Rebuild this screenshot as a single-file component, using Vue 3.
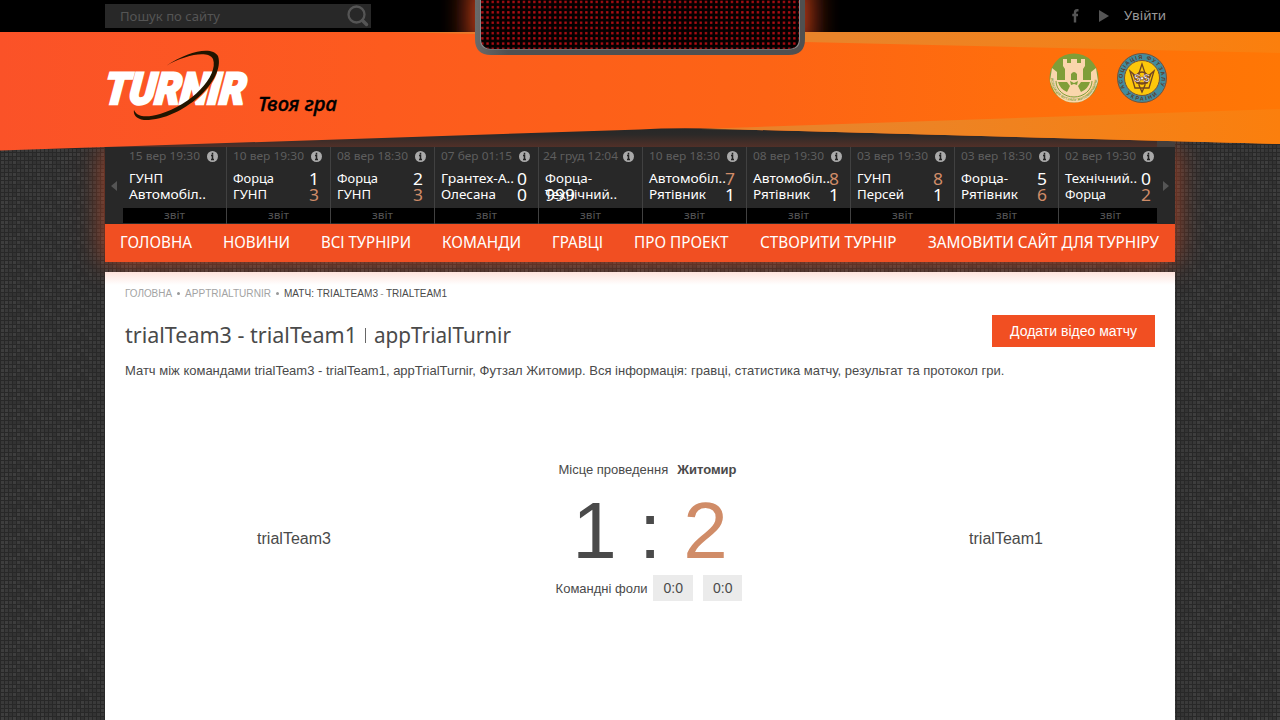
<script setup>
import { h } from 'vue'

// Single line of text stretched to a fixed measure.
const FitText = (props) =>
  h('svg', { class: 'fit', width: props.w, height: props.size * 1.25 }, [
    h('text', { x: 0, y: props.size, 'font-size': props.size, textLength: props.w, lengthAdjust: 'spacingAndGlyphs', fill: 'currentColor' }, props.text)
  ])
FitText.props = ['text', 'w', 'size']

const matches = [
  { date: '15 вер 19:30', a: 'ГУНП', aw: 34, b: 'Автомобіл..', bw: 77, s: ['', ''] },
  { date: '10 вер 19:30', a: 'Форца', aw: 41, b: 'ГУНП', bw: 34, s: ['1', '3'], win: 1 },
  { date: '08 вер 18:30', a: 'Форца', aw: 41, b: 'ГУНП', bw: 34, s: ['2', '3'], win: 1 },
  { date: '07 бер 01:15', a: 'Грантех-А..', aw: 73, b: 'Олесана', bw: 55, s: ['0', '0'] },
  { date: '24 груд 12:04', dw: 75, a: 'Форца-', aw: 47, b: 'Технічний..', bw: 72, s: ['', ''], over: '999' },
  { date: '10 вер 18:30', a: 'Автомобіл..', aw: 77, b: 'Рятівник', bw: 57, s: ['7', '1'], win: 0 },
  { date: '08 вер 19:30', a: 'Автомобіл..', aw: 77, b: 'Рятівник', bw: 57, s: ['8', '1'], win: 0 },
  { date: '03 вер 19:30', a: 'ГУНП', aw: 34, b: 'Персей', bw: 47, s: ['8', '1'], win: 0 },
  { date: '03 вер 18:30', a: 'Форца-', aw: 47, b: 'Рятівник', bw: 57, s: ['5', '6'], win: 1 },
  { date: '02 вер 19:30', a: 'Технічний..', aw: 72, b: 'Форца', bw: 41, s: ['0', '2'], win: 1 }
]
const nav = [
  ['ГОЛОВНА', 72], ['НОВИНИ', 67], ['ВСІ ТУРНІРИ', 90], ['КОМАНДИ', 79],
  ['ГРАВЦІ', 51], ['ПРО ПРОЕКТ', 94.5], ['СТВОРИТИ ТУРНІР', 136.5], ['ЗАМОВИТИ САЙТ ДЛЯ ТУРНІРУ', 231]
]
const shades = ['#3a3a3a', '#353535', '#383838', '#3e3e3e', '#333333']
const tiles = Array.from({ length: 256 }, (_, i) => ({
  x: (i % 16) * 4, y: Math.floor(i / 16) * 4,
  c: shades[(i * 7 + ((i * i) >> 3) + ((i * 13) >> 4)) % 5]
}))
</script>

<template>
  <div class="page">
    <svg class="texture" width="1280" height="720">
      <defs>
        <pattern id="mesh" width="64" height="64" patternUnits="userSpaceOnUse">
          <rect width="64" height="64" fill="#282828" />
          <rect v-for="(t, i) in tiles" :key="i" :x="t.x + 1" :y="t.y + 1" width="3" height="3" :fill="t.c" />
        </pattern>
      </defs>
      <rect width="1280" height="720" fill="url(#mesh)" />
    </svg>

    <header class="header">
      <div class="topbar">
        <div class="search">
          <FitText text="Пошук по сайту" :w="100" :size="13" />
          <svg width="22" height="22" viewBox="0 0 22 22" fill="none" stroke="#555">
            <circle cx="9.5" cy="9.500" r="8" stroke-width="2.300" /><path d="M15.500 15.500L19.500 19.500" stroke-width="3.500" stroke-linecap="round" />
          </svg>
        </div>
        <div class="links">
          <svg class="fb" width="7" height="14" viewBox="0 0 7 14"><path d="M6.500 1.200H5.200C3.600 1.200 3 2 3 4V13.500M.3 6H6" fill="none" stroke="#555" stroke-width="2.400" /></svg>
          <svg class="play" width="10" height="12"><path d="M0 0L10 6L0 12Z" fill="#555" /></svg>
          <FitText text="Увійти" :w="42" :size="13" />
        </div>
      </div>

      <svg class="banner" width="1280" height="152" viewBox="0 0 1280 152">
        <defs>
          <linearGradient id="flame"><stop offset="0" stop-color="#fb5228" /><stop offset=".3" stop-color="#fd5b1e" /><stop offset=".6" stop-color="#fd6415" /><stop offset=".8" stop-color="#ff6e0c" /><stop offset="1" stop-color="#ff7705" /></linearGradient>
          <linearGradient id="band" gradientUnits="userSpaceOnUse" x1="400" x2="1280" y1="0" y2="0"><stop offset="0" stop-color="#e9782b" /><stop offset=".5" stop-color="#e9842a" /><stop offset="1" stop-color="#fb7f0d" /></linearGradient>
          <linearGradient id="under" x1="0" x2="0" y1="0" y2="1"><stop offset="0" stop-color="#262727" /><stop offset=".4" stop-color="#2b2928" /><stop offset="1" stop-color="#513028" /></linearGradient>
          <linearGradient id="frame" x1="0" x2="1" y1="0" y2="0"><stop offset="0" stop-color="#6a6a6a" /><stop offset=".1" stop-color="#505050" /><stop offset="1" stop-color="#505050" /></linearGradient>
          <pattern id="led" x="480.200" y="-.2" width="5.200" height="5.200" patternUnits="userSpaceOnUse"><rect x="1" y="1" width="2.300" height="2.300" fill="#b50d13" /></pattern>
          <filter id="soft" x="-20%" y="-80%" width="140%" height="260%"><feGaussianBlur stdDeviation="14" /></filter>
          <clipPath id="bar"><rect width="1280" height="32" /></clipPath>
        </defs>
        <rect x="105" y="126" width="1070" height="21" fill="url(#under)" />
        <rect x="1157" y="140" width="18" height="7" fill="#443e3c" />
        <path d="M0 32H1280V144L740 129.500Q680 127 640 129.500L0 150.500Z" fill="url(#flame)" />
        <path d="M390 32H1280V53L805 42L475 34Z M700 129L1280 109V144L740 129.500Z" fill="url(#band)" />
        <g clip-path="url(#bar)"><rect x="470" y="-20" width="340" height="70" fill="#e8481c" opacity=".95" filter="url(#soft)" /></g>
        <path d="M475 0H805V39Q805 55 789 55H491Q475 55 475 39Z" fill="url(#frame)" />
        <path d="M480 0H800V39Q800 49.500 789 49.500H491Q480 49.500 480 39Z" fill="#8a8a8a" />
        <path d="M481 0H799V38Q799 49 788 49H492Q481 49 481 38Z" fill="#050000" />
        <path d="M481 0H799V38Q799 49 788 49H492Q481 49 481 38Z" fill="url(#led)" />

        <g transform="translate(103.500 104) skewX(-6)">
          <text x="0" y="0" class="wordmark" textLength="141" lengthAdjust="spacingAndGlyphs">TURNIR</text>
        </g>
        <path d="M216 70Q214 84 190 104" fill="none" stroke="#fd5722" stroke-width="3" />
        <path d="M166 66C188 51 212 46 218 56C226 80 182 121 144 120C136 119 133 114 134 110C137 117 146 118 160 114C191 105 219 76 213 59C208 50 185 55 166 66Z" fill="#211500" />
        <text x="258" y="111" class="slogan" textLength="79" lengthAdjust="spacingAndGlyphs">Твоя гра</text>

        <g transform="translate(1074 78)">
          <circle r="24.500" fill="#7f9e38" />
          <path d="M-11-19H-7V-15H-3V-19H3V-15H7V-19H11V-12L9-9V3H3V-4Q0-8-3-4V3H-9V-9L-11-12Z" fill="#fad6ac" />
          <path d="M-22-10L-17-6V2H17V-6L22-10L24 3Q18 24.500 0 24.500Q-18 24.500-24 3Z" fill="#fad6ac" />
          <path d="M-16 4H-7L-4 8L-7 14Q-14 11-16 4ZM16 4H7L4 8L7 14Q14 11 16 4ZM-4 3L0 5L4 3L3 7L0 6L-3 7Z" fill="#7f9e38" />
          <path d="M-18 3A18 16 0 0 0 18 3" fill="none" stroke="#7f9e38" />
          <path id="leftText" d="M-23 0A23 23 0 0 0 23 0" fill="none" />
          <text class="seal green"><textPath href="#leftText" textLength="70">АСОЦІАЦІЯ ФУТЗАЛУ ЖИТОМИРЩИНИ</textPath></text>
        </g>
        <g transform="translate(1142 78)">
          <circle r="24.500" fill="#438c9d" stroke="#74523b" />
          <circle r="17.500" fill="#fdc80b" stroke="#74523b" />
          <g fill="none" stroke="#704522" stroke-width="1.300"><path d="M0-14L-3-5V7L0 14L3 7V-5ZM-12-7L-7 10H7L12-7L4 0H-4ZM-9-4L-5 5H5L9-4" /><circle r="6" /></g>
          <text class="monogram" x="-8" y="4" textLength="16">S•S</text>
          <path id="sealTop" d="M-17 10A19.500 19.500 0 1 1 17 10" fill="none" />
          <path id="sealBottom" d="M-18.500 13A22.800 22.800 0 0 0 18.500 13" fill="none" />
          <text class="seal ink"><textPath href="#sealTop" textLength="78">АСОЦІАЦІЯ ФУТЗАЛУ</textPath></text>
          <text class="seal ink"><textPath href="#sealBottom" startOffset="4" textLength="34">УКРАЇНИ</textPath></text>
        </g>
      </svg>
    </header>

    <section class="console">
      <div class="results">
        <div class="arrow"><svg width="6" height="10"><path d="M6 0V10L0 5Z" fill="#555" /></svg></div>
        <article v-for="(m, i) in matches" :key="i" class="match">
          <div class="date" :class="{ wide: m.dw }">
            <FitText :text="m.date" :w="m.dw || 71" :size="11.5" />
            <svg class="info" width="11" height="11" viewBox="0 0 11 11"><circle cx="5.500" cy="5.500" r="5.500" fill="#aaa" /><path d="M4 4.500H5.500V8.500M4 8.600H7M5.500 1.800V3.400" fill="none" stroke="#222" stroke-width="1.500" /></svg>
          </div>
          <div class="side">
            <FitText :text="m.a" :w="m.aw" :size="13" />
            <FitText v-if="m.s[0]" class="pts" :class="{ win: m.win === 0 }" :text="m.s[0]" :w="10" :size="16.5" />
          </div>
          <div class="side">
            <FitText :text="m.b" :w="m.bw" :size="13" />
            <FitText v-if="m.s[1]" class="pts" :class="{ win: m.win === 1 }" :text="m.s[1]" :w="10" :size="16.5" />
            <FitText v-if="m.over" class="over" :text="m.over" :w="30" :size="16.5" />
          </div>
          <div class="report"><FitText text="звіт" :w="21" :size="11" /></div>
        </article>
        <div class="arrow"><svg width="6" height="10"><path d="M0 0V10L6 5Z" fill="#555" /></svg></div>
      </div>
      <nav class="nav">
        <FitText v-for="n in nav" :key="n[0]" :text="n[0]" :w="n[1]" :size="15.5" />
      </nav>
    </section>

    <main class="content">
      <div class="crumbs">
        <FitText text="ГОЛОВНА" :w="47" :size="10" /><i></i>
        <FitText text="APPTRIALTURNIR" :w="86" :size="10" /><i></i>
        <div class="current"><FitText text="МАТЧ: TRIALTEAM3" :w="94" :size="10" /><span>-</span><FitText text="TRIALTEAM1" :w="61" :size="10" /></div>
      </div>
      <div class="heading">
        <h1>
          <FitText text="trialTeam3 - trialTeam1" :w="232" :size="21" />
          <i></i>
          <FitText text="appTrialTurnir" :w="137" :size="21" />
        </h1>
        <button>Додати відео матчу</button>
      </div>
      <p class="lead">Матч між командами trialTeam3 - trialTeam1, appTrialTurnir, Футзал Житомир. Вся інформація: гравці, статистика матчу, результат та протокол гри.</p>
      <div class="game">
        <div class="team">trialTeam3</div>
        <div class="summary">
          <div class="venue"><span>Місце проведення</span><b>Житомир</b></div>
          <div class="score">1 : <em>2</em></div>
          <div class="fouls"><span>Командні фоли</span><b>0:0</b><b>0:0</b></div>
        </div>
        <div class="team">trialTeam1</div>
      </div>
    </main>
  </div>
</template>

<style>
body { background: #2c2c2c; overflow: hidden; }
</style>

<style scoped>
.page { position: relative; height: 720px; overflow: hidden; font-family: "Liberation Sans", Arial, sans-serif; color: #4a4a4a; }
.texture { position: absolute; inset: 0; }
.fit { display: block; overflow: visible; flex: none; font-family: "Noto Sans", sans-serif; }
.header { position: relative; height: 147px; z-index: 3; }
.topbar { height: 32px; box-sizing: border-box; padding: 4px 114px 0 105px; background: #000; display: flex; justify-content: space-between; }
.search { width: 266px; height: 24px; box-sizing: border-box; padding: 0 2px 0 15px; background: #282828; color: #555; display: flex; align-items: center; justify-content: space-between; z-index: 1; }
.search .fit { margin-top: 1px; }
.links .fit { margin-top: -1px; }
.links { display: flex; align-items: center; height: 24px; color: #999; z-index: 1; }
.fb { margin-right: 20px; }
.play { margin-right: 15px; }
.banner { position: absolute; left: 0; top: 0; }
.wordmark { font: italic 900 44px Roboto, sans-serif; fill: #fff; stroke: #fff; stroke-width: 2.6px; }
.slogan { font: italic 500 19px "Noto Sans", sans-serif; fill: #000; stroke: #000; stroke-width: .4px; }
.seal { font: bold 4px "Liberation Sans", sans-serif; }
.green { fill: #7f9e38; font-size: 3.5px; }
.ink { fill: #5d3a2a; font-size: 5.5px; }
.monogram { font: bold 10px "Liberation Sans", sans-serif; fill: #fff; stroke: #70403a; stroke-width: .5px; }
.console { position: relative; z-index: 2; width: 1070px; margin: 0 auto; box-shadow: 0 0 26px rgba(241, 79, 34, .65); }
.results { height: 77px; background: #282828; display: flex; }
.arrow { flex: none; width: 18px; display: flex; align-items: center; justify-content: center; }
.match { flex: none; width: 104px; height: 77px; box-sizing: border-box; border-right: 1px solid #414141; color: #fff; }
.match:nth-last-child(2) { width: 98px; border: 0; }
.date { display: flex; align-items: center; gap: 7px; height: 18px; padding-left: 6px; margin-bottom: 5px; color: #5e5e5e; }
.date .fit { margin-top: -2px; }
.wide { padding-left: 4px; gap: 5px; }
.info { flex: none; }
.side { position: relative; height: 16px; padding-left: 6px; }
.pts { position: absolute; left: 82px; top: -2.5px; }
.over { position: absolute; left: 6px; top: -2.5px; }
.win { color: #d08c68; }
.report { height: 15px; margin-top: 6px; background: #000; color: #555; display: flex; justify-content: center; align-items: center; }
.report .fit { margin-top: -2px; }
.match:nth-last-child(2) .report { padding-left: 5px; }
.nav { height: 38px; box-sizing: border-box; padding: 0 16px 2px 15px; background: #f14f22; color: #fff; display: flex; align-items: center; gap: 31.1px; }
.content { position: relative; width: 1070px; height: 448px; margin: 10px auto 0; box-sizing: border-box; padding: 15px 20px 0; background: linear-gradient(#fee3dc, #fff 13px); z-index: 2; }
.crumbs { display: flex; color: #a3a3a3; height: 13px; }
.crumbs .fit { font-family: "Liberation Sans", sans-serif; }
.crumbs i { width: 3px; height: 3px; border-radius: 2px; background: #999; margin: 5px 5px 0; }
.current { display: flex; color: #4a4a4a; }
.current span { width: 8px; text-align: center; font-size: 10px; line-height: 13px; color: #999; }
.heading { height: 32px; margin-top: 15px; display: flex; justify-content: space-between; }
h1 { margin: 7px 0 0; font-size: 22px; font-weight: 400; display: flex; }
h1 i { width: 1px; height: 15px; margin: 6px 8px 0; background: #666; }
button { width: 163px; height: 32px; border: 0; padding: 0; background: #f14f22; color: #fff; font: 14px "Liberation Sans", Arial, sans-serif; }
.lead { margin: 15px 0 0; font-size: 13px; line-height: 18px; }
.game { width: 1050px; display: grid; grid-template-columns: 338px 374px 338px; margin-top: 82px; text-align: center; }
.team { font-size: 16px; line-height: 18px; padding-top: 68px; }
.venue { display: flex; justify-content: center; gap: 9px; padding-right: 5px; font-size: 13px; line-height: 16px; }
.score { font-size: 80px; line-height: 92px; margin: 7px 0 -2px; }
.score em { font-style: normal; color: #d08c68; }
.fouls { display: flex; justify-content: center; align-items: center; padding-right: 2px; font-size: 13px; height: 26px; }
.fouls span { margin-right: 6px; padding-top: 1px; }
.fouls b { font-weight: 400; font-size: 14px; line-height: 26px; padding: 0 10px; background: #ebebeb; }
.fouls b + b { margin-left: 10px; }
</style>
